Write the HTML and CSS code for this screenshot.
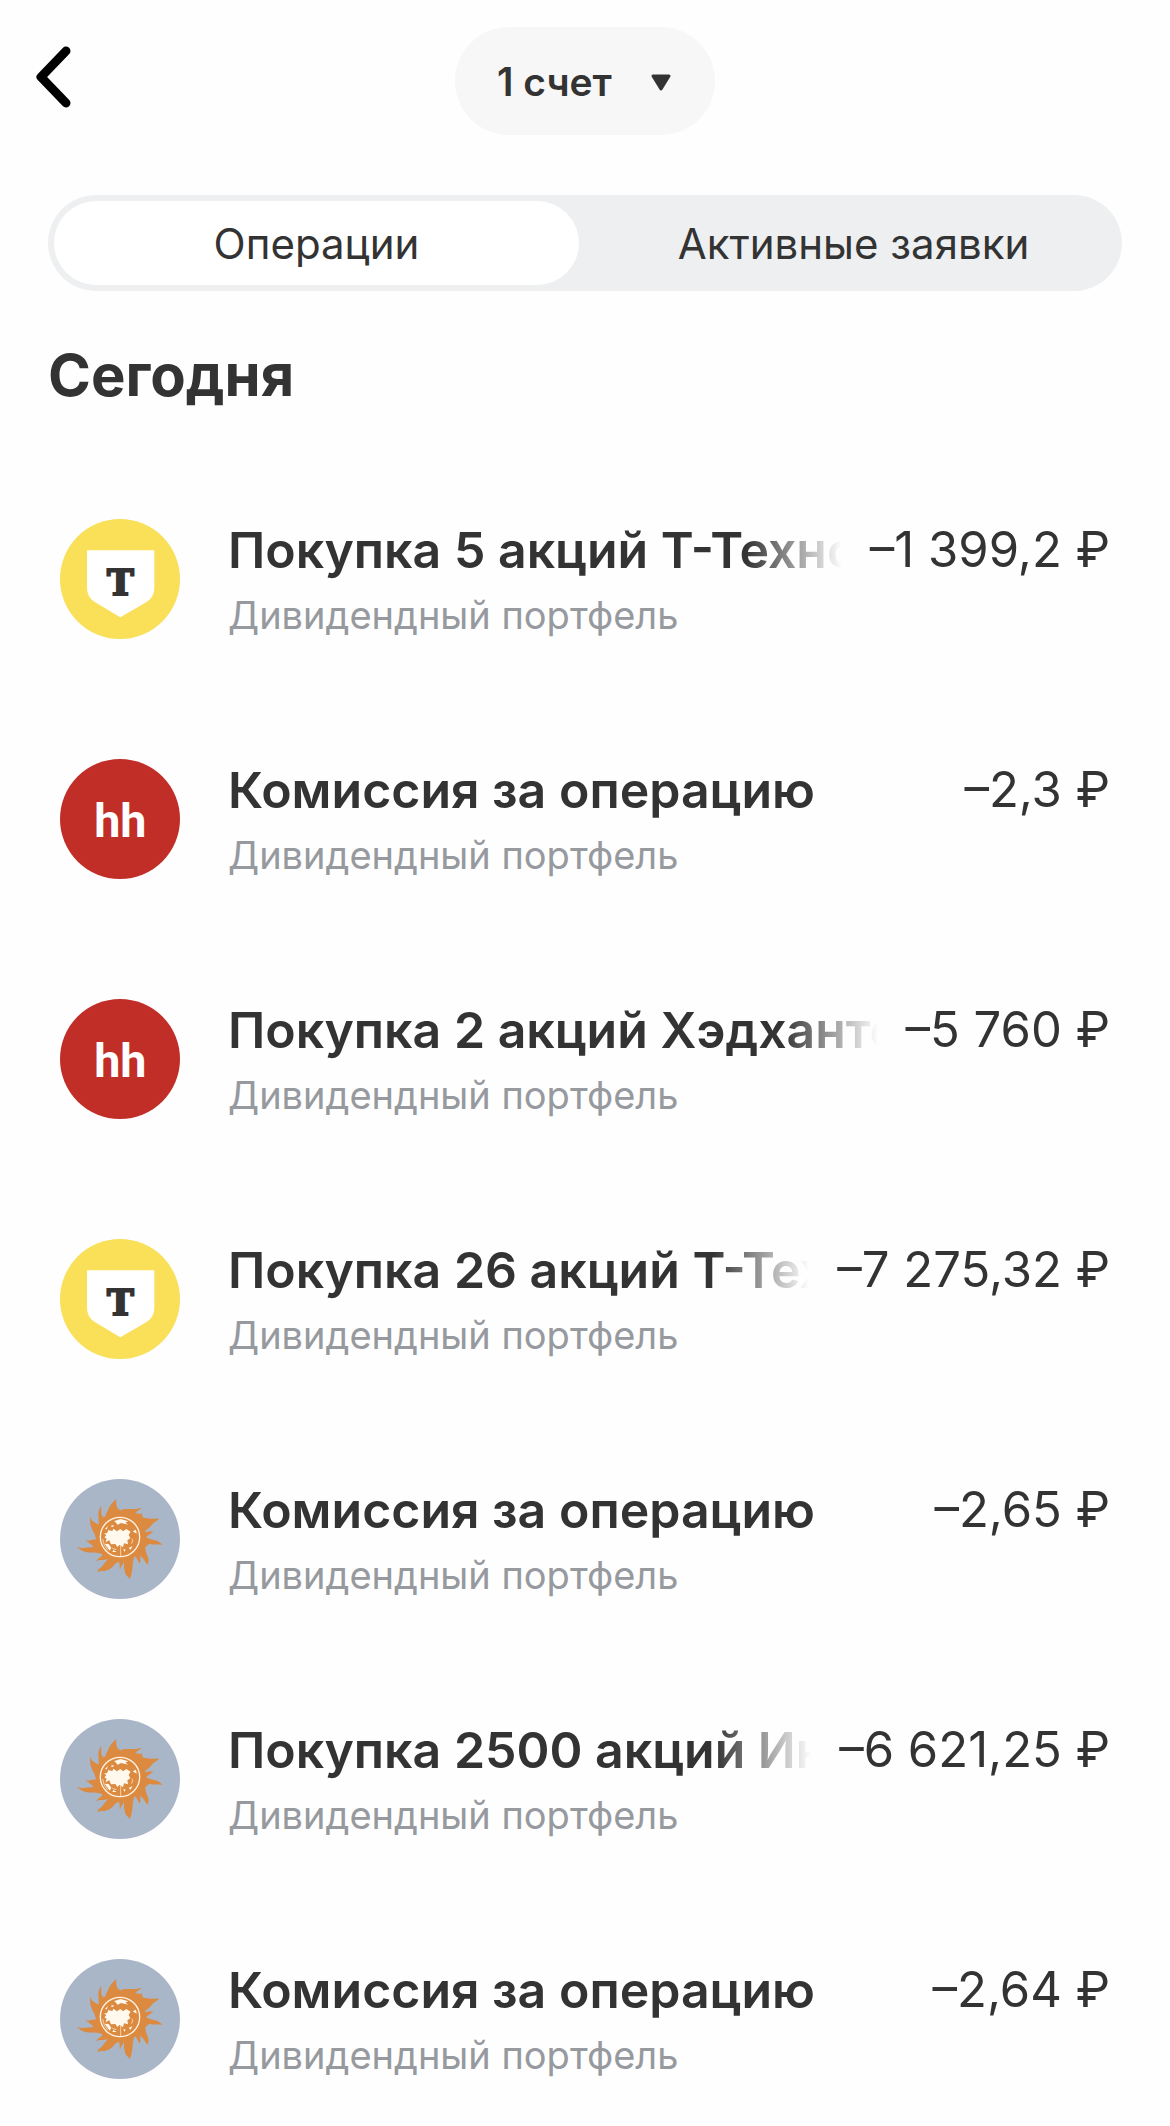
FILE: index.html
```html
<!DOCTYPE html>
<html lang="ru">
<head>
    <meta charset="UTF-8">
    <meta name="viewport" content="width=device-width">
    <title>Операции</title>
    <link rel="stylesheet" href="styles.css">
</head>

<body>
<!-- logos used by the list -->
<svg class="sprite" aria-hidden="true">
    <symbol id="logo-t" viewBox="30 57 360 360">
        <circle cx="210" cy="237" r="180" fill="#fadf58"/>
        <path fill="#fff" d="M111 151H313V264Q313 292 290 306L211 352L134 306Q111 292 111 264Z"/>
        <text class="logo-t-text" x="211" y="284" text-anchor="middle">T</text>
    </symbol>
    <symbol id="logo-hh" viewBox="30 27 360 360">
        <circle cx="210" cy="207" r="180" fill="#c12d27"/>
        <text class="logo-hh-text" x="211" y="261" text-anchor="middle">hh</text>
    </symbol>
    <symbol id="logo-sun" viewBox="30 27 360 360">
        <circle cx="210" cy="207" r="180" fill="#a9b6c8"/>
        <path fill="#dc8a40" d="M200 86C195 105 202 118 212 121C229 111 239 123 275 113C269 121 257 124 256 130C267 128 269 136 278 130C272 140 282 145 296 145C308 149 316 144 327 146C319 155 307 158 302 169C293 180 282 182 287 187C295 183 301 186 311 182C301 195 288 196 290 203C307 211 323 207 338 225C322 221 311 226 300 222C290 222 294 231 286 230C285 252 302 264 293 284C285 276 280 264 272 258C269 266 274 275 268 280C263 271 261 263 254 259C245 275 251 305 239 327C232 316 224 317 224 300C219 290 225 281 221 277C216 288 210 292 210 301C207 289 211 280 206 275C192 280 187 297 172 300C162 306 151 300 142 307C145 293 155 295 161 283C164 276 174 273 171 267C160 273 148 267 137 274C146 262 156 262 157 253C132 241 112 259 80 231C99 238 115 231 130 231C126 221 115 220 106 211C118 215 127 206 137 209C140 190 113 173 122 139C123 154 132 156 145 164C150 151 138 132 153 107C155 125 151 136 162 143C172 133 171 109 200 86Z"/>
        <circle cx="210" cy="201" r="59" fill="#dc8a40" stroke="#fff1df" stroke-width="4"/>
        <path fill="#fff8ed" d="M193 153L212 147L235 154L226 158L235 164L213 159L203 164ZM175 180L187 183L190 176L201 184L211 177L219 184L229 177L242 185L236 194L241 205L232 211L234 223L222 220L219 232L209 224L202 231L196 222L183 223L178 211L166 217L170 206L163 202L169 196L162 190L171 190ZM164 221L176 222L184 233L179 242ZM220 236L227 239L223 246ZM236 234L247 228L242 239ZM248 184L258 179L260 191ZM185 164L193 168L184 172ZM165 178L173 168L171 178ZM190 240L200 246L187 246Z"/>
        <path fill="none" stroke="#fff1df" stroke-width="2" d="M212 225V258M158 207Q160 225 172 240M246 206Q251 212 244 221M187 235L199 239"/>
    </symbol>
</svg>

<header class="header">
    <button class="back" type="button" aria-label="Назад">
        <svg viewBox="0 0 36 62"><path d="M31 5L6 31L31 57"/></svg>
    </button>
    <div class="account">
        <select class="account-select" aria-label="Счет">
            <option>1 счет</option>
        </select>
        <svg class="account-arrow" viewBox="0 0 22 18"><path d="M3 2H19L11 15Z"/></svg>
    </div>
</header>

<main>
    <div class="tabs" role="tablist">
        <button class="tab selected" type="button" role="tab" aria-selected="true">Операции</button>
        <button class="tab" type="button" role="tab" aria-selected="false">Активные заявки</button>
    </div>

    <h1 class="day">Сегодня</h1>

    <ul class="list">
        <li class="item">
            <svg class="logo"><use href="#logo-t"/></svg>
            <div class="info">
                <div class="line">
                    <span class="name fade">Покупка 5 акций Т-Технологии</span>
                    <span class="sum">–1 399,2 ₽</span>
                </div>
                <p class="portfolio">Дивидендный портфель</p>
            </div>
        </li>
        <li class="item">
            <svg class="logo"><use href="#logo-hh"/></svg>
            <div class="info">
                <div class="line">
                    <span class="name">Комиссия за операцию</span>
                    <span class="sum">–2,3 ₽</span>
                </div>
                <p class="portfolio">Дивидендный портфель</p>
            </div>
        </li>
        <li class="item">
            <svg class="logo"><use href="#logo-hh"/></svg>
            <div class="info">
                <div class="line">
                    <span class="name fade">Покупка 2 акций Хэдхантер</span>
                    <span class="sum">–5 760 ₽</span>
                </div>
                <p class="portfolio">Дивидендный портфель</p>
            </div>
        </li>
        <li class="item">
            <svg class="logo"><use href="#logo-t"/></svg>
            <div class="info">
                <div class="line">
                    <span class="name fade">Покупка 26 акций Т-Технологии</span>
                    <span class="sum">–7 275,32 ₽</span>
                </div>
                <p class="portfolio">Дивидендный портфель</p>
            </div>
        </li>
        <li class="item">
            <svg class="logo"><use href="#logo-sun"/></svg>
            <div class="info">
                <div class="line">
                    <span class="name">Комиссия за операцию</span>
                    <span class="sum">–2,65 ₽</span>
                </div>
                <p class="portfolio">Дивидендный портфель</p>
            </div>
        </li>
        <li class="item">
            <svg class="logo"><use href="#logo-sun"/></svg>
            <div class="info">
                <div class="line">
                    <span class="name fade">Покупка 2500 акций Интер РАО</span>
                    <span class="sum">–6 621,25 ₽</span>
                </div>
                <p class="portfolio">Дивидендный портфель</p>
            </div>
        </li>
        <li class="item">
            <svg class="logo"><use href="#logo-sun"/></svg>
            <div class="info">
                <div class="line">
                    <span class="name">Комиссия за операцию</span>
                    <span class="sum">–2,64 ₽</span>
                </div>
                <p class="portfolio">Дивидендный портфель</p>
            </div>
        </li>
    </ul>
</main>
</body>
</html>
```

FILE: styles.css
```css
*{
    margin: 0;
    padding: 0;
    box-sizing: border-box;
}
body{
    background: #fefefe;
    color: #333;
    font-family: Inter, "Liberation Sans", sans-serif;
}
ul{
    list-style: none;
}
button,select{
    border: none;
    background: none;
    color: inherit;
    font-family: inherit;
    cursor: pointer;
}
.sprite{
    display: none;
}

/* header */
.header{
    display: grid;
    grid-template-columns: 1fr auto 1fr;
    align-items: start;
    padding: 27px 35px 0;
}
.back{
    justify-self: start;
    width: 36px;
    height: 100px;
}
.back svg{
    display: block;
    width: 36px;
    height: 62px;
    fill: none;
    stroke: #000;
    stroke-width: 9;
    stroke-linecap: round;
    stroke-linejoin: round;
}
.account{
    position: relative;
}
.account-select{
    appearance: none;
    display: block;
    height: 108px;
    padding: 0 103px 0 42px;
    border-radius: 54px;
    background: #f7f7f7;
    font-size: 39px;
    font-weight: 600;
}
.account-arrow{
    position: absolute;
    right: 43px;
    top: 47px;
    width: 22px;
    height: 18px;
    fill: #333;
    stroke: #333;
    stroke-width: 3;
    stroke-linejoin: round;
    pointer-events: none;
}

/* tabs */
.tabs{
    display: flex;
    gap: 12px;
    margin: 60px 48px 0;
    padding: 6px;
    border-radius: 48px;
    background: #edeff1;
}
.tab{
    flex: 1;
    height: 84px;
    border-radius: 42px;
    font-size: 42px;
    font-weight: 400;
}
.tab.selected{
    background: #fff;
}

/* list */
.day{
    margin: 48px 48px 0;
    font-size: 58px;
    font-weight: 700;
    line-height: 72px;
}
.list{
    padding: 48px 60px 0;
}
.item{
    display: flex;
    align-items: center;
    gap: 48px;
    height: 240px;
}
.logo{
    flex: none;
    width: 120px;
    height: 120px;
}
.logo-t-text{
    fill: #333;
    stroke: #333;
    stroke-width: 6px;
    font: bold 108px "DejaVu Serif", serif;
}
.logo-hh-text{
    fill: #fff;
    font: 700 140px Roboto, sans-serif;
}
.info{
    flex: 1;
    min-width: 0;
}
.line{
    display: flex;
    justify-content: space-between;
    gap: 28px;
    font-size: 50px;
    line-height: 72px;
    white-space: nowrap;
}
.name{
    min-width: 0;
    overflow: hidden;
    font-weight: 600;
}
.name.fade{
    -webkit-mask-image: linear-gradient(to left, transparent, #000 96px);
    mask-image: linear-gradient(to left, transparent, #000 96px);
}
.sum{
    flex: none;
    font-size: 49px;
}
.portfolio{
    color: #96999e;
    font-size: 38px;
    line-height: 58px;
}
```
